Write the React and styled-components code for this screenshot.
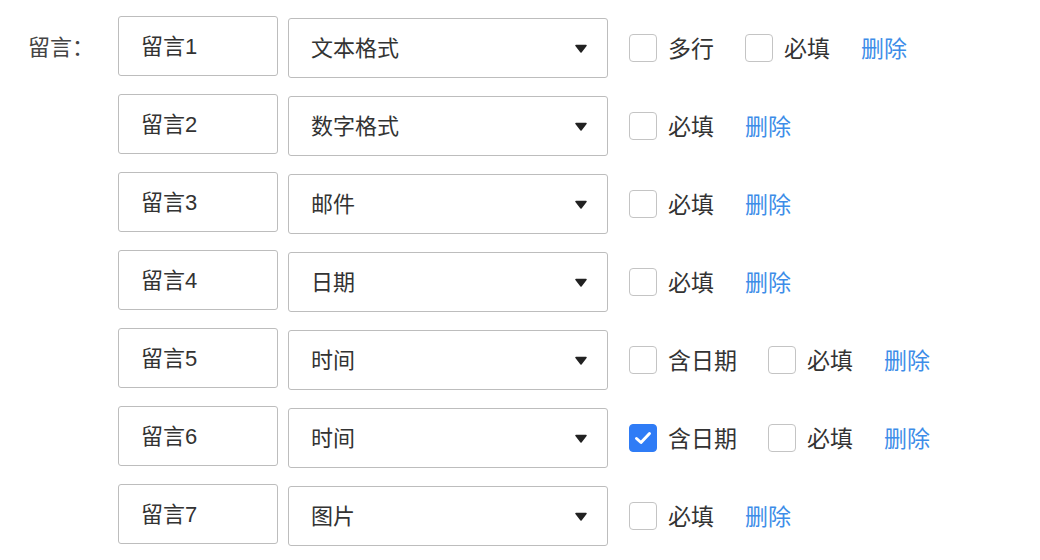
import React from "react";
import styled, { createGlobalStyle } from "styled-components";

const GlobalStyle = createGlobalStyle`
  body {
    margin: 0;
    background: #fff;
    font-family: "Liberation Sans", "Noto Sans CJK SC", sans-serif;
    color: #333;
  }
`;

const Form = styled.div`
  display: flex;
  padding: 16px 0 0 28px;
`;

const Label = styled.div`
  width: 90px;
  height: 60px;
  padding-bottom: 3px;
  box-sizing: border-box;
  display: flex;
  align-items: center;
  font-size: 22px;
  color: #444;
`;

const Rows = styled.div`
  display: flex;
  flex-direction: column;
  gap: 16px;
`;

const Row = styled.div`
  display: flex;
  align-items: flex-start;
  height: 62px;
`;

const NameBox = styled.div`
  box-sizing: border-box;
  width: 160px;
  height: 60px;
  border: 1.5px solid #bdbdbd;
  border-radius: 3px;
  padding: 0 22px 5px;
  display: flex;
  align-items: center;
  font-size: 22px;
  color: #333;
`;

const Select = styled.div`
  box-sizing: border-box;
  width: 320px;
  height: 60px;
  margin: 2px 0 0 10px;
  border: 1.5px solid #bdbdbd;
  border-radius: 3px;
  padding: 0 20px 0 22px;
  display: flex;
  align-items: center;
  justify-content: space-between;
  font-size: 22px;
  color: #333;

  span {
    padding-bottom: 4px;
  }
`;

const Options = styled.div`
  display: flex;
  align-items: center;
  gap: 31px;
  height: 60px;
  margin: 2px 0 0 21px;
`;

const Option = styled.div`
  display: flex;
  align-items: center;
  gap: 11px;
  font-size: 23px;
  color: #333;

  span:last-child {
    padding-bottom: 3px;
  }
`;

const Box = styled.i`
  box-sizing: border-box;
  width: 28px;
  height: 28px;
  border-radius: 4px;
  border: 1.5px solid ${(p) => (p.$checked ? "#2f7cf6" : "#c4c4c4")};
  background: ${(p) => (p.$checked ? "#2f7cf6" : "#fff")};
  display: flex;
  align-items: center;
  justify-content: center;
`;

const Delete = styled.span`
  font-size: 23px;
  color: #3d8de8;
  cursor: pointer;
  padding-bottom: 3px;
`;

const Caret = () => (
  <svg width="12" height="9" viewBox="0 0 12 9">
    <path d="M1 1.5 L11 1.5 L6 8 Z" fill="#222" stroke="#222" strokeWidth="1.5" strokeLinejoin="round" />
  </svg>
);

const Check = () => (
  <svg width="18" height="14" viewBox="0 0 18 14">
    <path d="M2.5 7.5 L7 11.5 L15.5 2.5" fill="none" stroke="#fff" strokeWidth="3" strokeLinecap="round" strokeLinejoin="round" />
  </svg>
);

const rows = [
  { name: "留言1", type: "文本格式", opts: [["多行", false], ["必填", false]] },
  { name: "留言2", type: "数字格式", opts: [["必填", false]] },
  { name: "留言3", type: "邮件", opts: [["必填", false]] },
  { name: "留言4", type: "日期", opts: [["必填", false]] },
  { name: "留言5", type: "时间", opts: [["含日期", false], ["必填", false]] },
  { name: "留言6", type: "时间", opts: [["含日期", true], ["必填", false]] },
  { name: "留言7", type: "图片", opts: [["必填", false]] },
];

const App = () => (
  <>
    <GlobalStyle />
    <Form>
      <Label>留言：</Label>
      <Rows>
        {rows.map((r) => (
          <Row key={r.name}>
            <NameBox>{r.name}</NameBox>
            <Select>
              <span>{r.type}</span>
              <Caret />
            </Select>
            <Options>
              {r.opts.map(([text, checked]) => (
                <Option key={text}>
                  <Box $checked={checked}>{checked && <Check />}</Box>
                  <span>{text}</span>
                </Option>
              ))}
              <Delete>删除</Delete>
            </Options>
          </Row>
        ))}
      </Rows>
    </Form>
  </>
);

export default App;
